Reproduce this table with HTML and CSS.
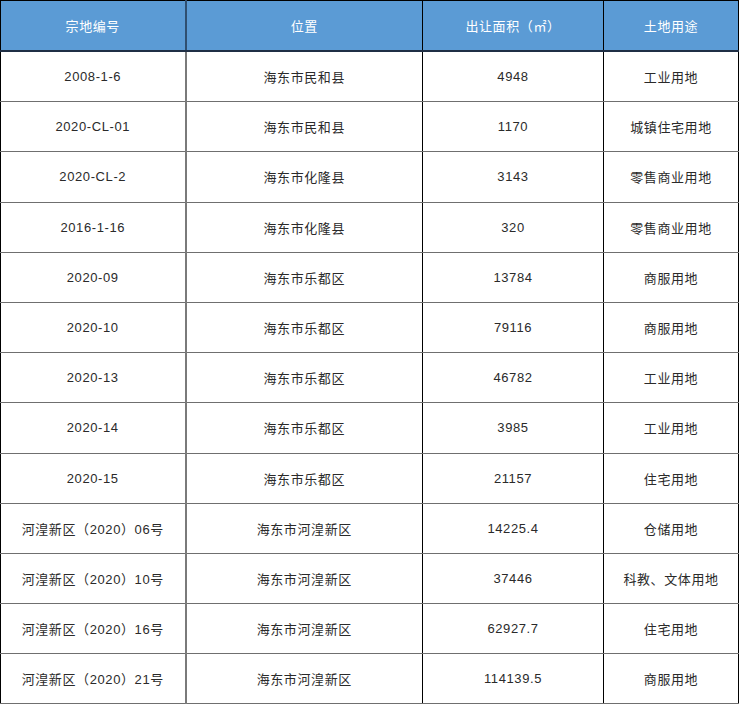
FILE: index.html
```html
<!DOCTYPE html>
<html lang="zh">
<head>
<meta charset="utf-8">
<link rel="stylesheet" href="styles.css">
</head>
<body>
<table class="land">
  <colgroup>
    <col class="c1"><col class="c2"><col class="c3"><col class="c4">
  </colgroup>
  <thead>
    <tr><th>宗地编号</th><th>位置</th><th>出让面积（㎡）</th><th>土地用途</th></tr>
  </thead>
  <tbody>
    <tr><td>2008-1-6</td><td>海东市民和县</td><td>4948</td><td>工业用地</td></tr>
    <tr><td>2020-CL-01</td><td>海东市民和县</td><td>1170</td><td>城镇住宅用地</td></tr>
    <tr><td>2020-CL-2</td><td>海东市化隆县</td><td>3143</td><td>零售商业用地</td></tr>
    <tr><td>2016-1-16</td><td>海东市化隆县</td><td>320</td><td>零售商业用地</td></tr>
    <tr><td>2020-09</td><td>海东市乐都区</td><td>13784</td><td>商服用地</td></tr>
    <tr><td>2020-10</td><td>海东市乐都区</td><td>79116</td><td>商服用地</td></tr>
    <tr><td>2020-13</td><td>海东市乐都区</td><td>46782</td><td>工业用地</td></tr>
    <tr><td>2020-14</td><td>海东市乐都区</td><td>3985</td><td>工业用地</td></tr>
    <tr><td>2020-15</td><td>海东市乐都区</td><td>21157</td><td>住宅用地</td></tr>
    <tr><td>河湟新区（2020）06号</td><td>海东市河湟新区</td><td>14225.4</td><td>仓储用地</td></tr>
    <tr><td>河湟新区（2020）10号</td><td>海东市河湟新区</td><td>37446</td><td>科教、文体用地</td></tr>
    <tr><td>河湟新区（2020）16号</td><td>海东市河湟新区</td><td>62927.7</td><td>住宅用地</td></tr>
    <tr><td>河湟新区（2020）21号</td><td>海东市河湟新区</td><td>114139.5</td><td>商服用地</td></tr>
  </tbody>
</table>
</body>
</html>
```

FILE: styles.css
```css
html, body {
  margin: 0;
  padding: 0;
  background: #ffffff;
}

.land {
  border-collapse: collapse;
  table-layout: fixed;
  width: 738px;
  font-family: "Liberation Sans", "Noto Sans CJK SC", sans-serif;
  font-size: 13px;
  color: #2a2a2a;
}

.c1 { width: 185px; }
.c2 { width: 237px; }
.c3 { width: 181px; }
.c4 { width: 135px; }

.land th,
.land td {
  text-align: center;
  vertical-align: middle;
  padding: 0;
  border-left: 1px solid #000;
  border-right: 1px solid #000;
  border-top: 1px solid #6f6f6f;
  border-bottom: 1px solid #6f6f6f;
  letter-spacing: 0.6px;
}

.land th {
  background: #5b9bd5;
  color: #ffffff;
  font-weight: normal;
  height: 49px;
  border-top: 1px solid #000;
  border-bottom: 2px solid #1f2f45;
}

.land td {
  height: 49.2px;
}

.land td:first-child {
  border-right: 2px solid #7a7a7a;
}

.land th:first-child {
  border-right: 2px solid #2f4f70;
}
```
